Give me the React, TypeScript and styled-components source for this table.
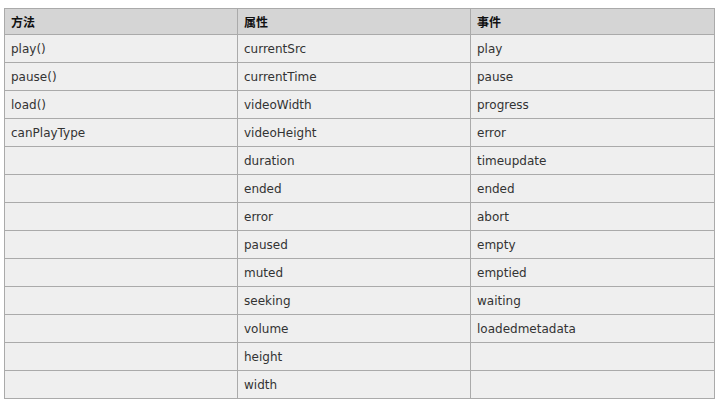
import React from "react";
import styled, { createGlobalStyle } from "styled-components";

const Global = createGlobalStyle`
  html, body { margin: 0; padding: 0; background: #ffffff; }
  body { font-family: "DejaVu Sans", Verdana, "Noto Sans CJK SC", sans-serif; }
`;

const Wrap = styled.div`
  padding: 8px 0 0 4px;
`;

const Table = styled.table`
  border-collapse: collapse;
  width: 711px;
  table-layout: fixed;
  font-size: 12px;
  color: #333333;
`;

const Th = styled.th`
  background: #d5d5d5;
  border: 1px solid #aaaaaa;
  height: 25px;
  padding: 0 0 0 6px;
  text-align: left;
  font-weight: bold;
  color: #111111;
  font-family: "Noto Sans CJK SC", sans-serif;
  font-size: 12px;
  vertical-align: middle;
`;

const Td = styled.td`
  background: #efefef;
  border: 1px solid #aaaaaa;
  height: 27px;
  padding: 0 0 0 6px;
  vertical-align: middle;
  white-space: nowrap;
`;

const methods = ["play()", "pause()", "load()", "canPlayType"];
const props = [
  "currentSrc",
  "currentTime",
  "videoWidth",
  "videoHeight",
  "duration",
  "ended",
  "error",
  "paused",
  "muted",
  "seeking",
  "volume",
  "height",
  "width",
];
const events = [
  "play",
  "pause",
  "progress",
  "error",
  "timeupdate",
  "ended",
  "abort",
  "empty",
  "emptied",
  "waiting",
  "loadedmetadata",
];

export default function App() {
  return (
    <>
      <Global />
      <Wrap>
        <Table>
          <colgroup>
            <col style={{ width: 233 }} />
            <col style={{ width: 233 }} />
            <col style={{ width: 244 }} />
          </colgroup>
          <thead>
            <tr>
              <Th>方法</Th>
              <Th>属性</Th>
              <Th>事件</Th>
            </tr>
          </thead>
          <tbody>
            {props.map((p, i) => (
              <tr key={p}>
                <Td>{methods[i] ?? ""}</Td>
                <Td>{p}</Td>
                <Td>{events[i] ?? ""}</Td>
              </tr>
            ))}
          </tbody>
        </Table>
      </Wrap>
    </>
  );
}
